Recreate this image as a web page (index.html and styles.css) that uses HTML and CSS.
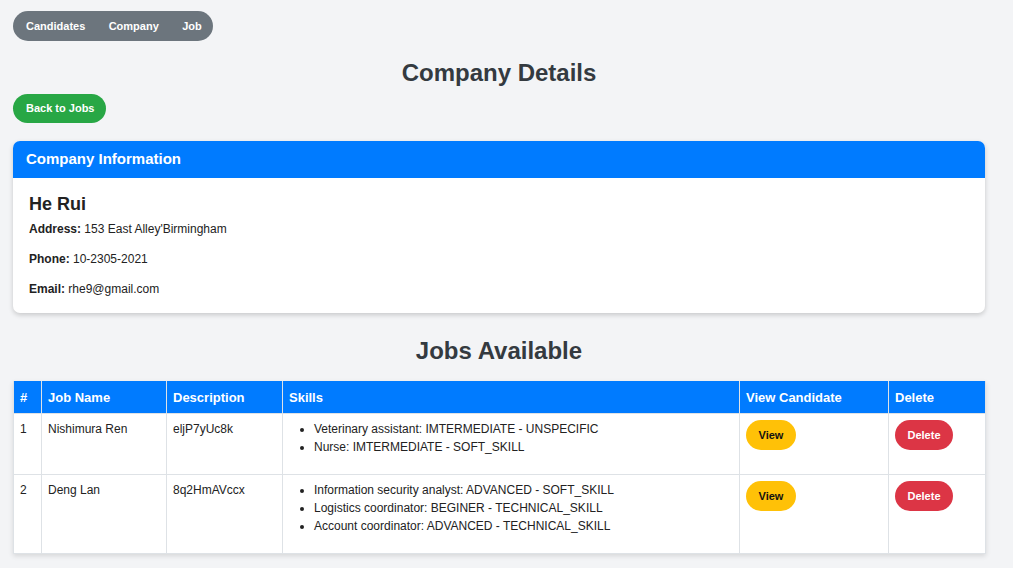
FILE: index.html
```html
<!DOCTYPE html>
<html lang="en">
<head>
<meta charset="utf-8">
<title>Company Details</title>
<link rel="stylesheet" href="styles.css">
</head>
<body>
<div class="page">
  <nav class="nav">
    <a href="#" class="nav-link">Candidates</a>
    <a href="#" class="nav-link">Company</a>
    <a href="#" class="nav-link">Job</a>
  </nav>
  <h1 class="title">Company Details</h1>
  <div class="actions"><a href="#" class="btn btn-green">Back to Jobs</a></div>

  <section class="card">
    <div class="card-header">Company Information</div>
    <div class="card-body">
      <h3 class="company-name">He Rui</h3>
      <p><strong>Address:</strong> 153 East Alley'Birmingham</p>
      <p><strong>Phone:</strong> 10-2305-2021</p>
      <p class="last"><strong>Email:</strong> rhe9@gmail.com</p>
    </div>
  </section>

  <h2 class="title title-jobs">Jobs Available</h2>

  <table class="jobs">
    <colgroup>
      <col class="c-num"><col class="c-name"><col class="c-desc"><col class="c-skills"><col class="c-view"><col class="c-del">
    </colgroup>
    <thead>
      <tr><th>#</th><th>Job Name</th><th>Description</th><th>Skills</th><th>View Candidate</th><th>Delete</th></tr>
    </thead>
    <tbody>
      <tr>
        <td>1</td>
        <td>Nishimura Ren</td>
        <td>eljP7yUc8k</td>
        <td><ul class="skills">
          <li>Veterinary assistant: IMTERMEDIATE - UNSPECIFIC</li>
          <li>Nurse: IMTERMEDIATE - SOFT_SKILL</li>
        </ul></td>
        <td><a href="#" class="btn btn-yellow">View</a></td>
        <td><a href="#" class="btn btn-red">Delete</a></td>
      </tr>
      <tr>
        <td>2</td>
        <td>Deng Lan</td>
        <td>8q2HmAVccx</td>
        <td><ul class="skills">
          <li>Information security analyst: ADVANCED - SOFT_SKILL</li>
          <li>Logistics coordinator: BEGINER - TECHNICAL_SKILL</li>
          <li>Account coordinator: ADVANCED - TECHNICAL_SKILL</li>
        </ul></td>
        <td><a href="#" class="btn btn-yellow">View</a></td>
        <td><a href="#" class="btn btn-red">Delete</a></td>
      </tr>
    </tbody>
  </table>
</div>
</body>
</html>
```

FILE: styles.css
```css
* { box-sizing: border-box; }
html, body { margin: 0; padding: 0; }
body {
  background: #f3f4f6;
  font-family: "Liberation Sans", Arial, sans-serif;
  color: #222;
}
.page {
  padding: 11px 28px 20px 13px;
}
.nav {
  display: inline-flex;
  align-items: center;
  height: 30px;
  background: #6c757d;
  border-radius: 15px;
}
.nav-link {
  color: #fff;
  text-decoration: none;
  font-weight: bold;
  font-size: 11px;
  padding: 0 11.7px;
  line-height: 30px;
}
.nav-link:first-child { padding-left: 13px; }
.title {
  text-align: center;
  font-size: 24px;
  font-weight: bold;
  color: #343a40;
  line-height: 28px;
  margin: 18px 0 7px;
}
.title-jobs { margin: 24px 0 16px; }
.actions { display: flex; }
.btn {
  display: inline-block;
  text-decoration: none;
  font-weight: bold;
  font-size: 11px;
  line-height: 14px;
  padding: 8px 12.5px;
  border-radius: 15px;
}
.btn-green { background: #28a745; color: #fff; padding: 7px 11.5px 8px 13px; }
.btn-yellow { background: #ffc107; color: #111; }
.btn-red { background: #dc3545; color: #fff; }
.card {
  margin-top: 18px;
  background: #fff;
  border-radius: 7px;
  overflow: hidden;
  box-shadow: 0 2px 5px rgba(0,0,0,0.18);
}
.card-header {
  background: #007bff;
  color: #fff;
  font-weight: bold;
  font-size: 15px;
  height: 37px;
  line-height: 35px;
  padding: 0 13px;
}
.card-body { padding: 15px 15px 15px 16px; }
.company-name {
  margin: 0 0 5px;
  font-size: 18px;
  line-height: 22px;
  color: #222;
}
.card-body p {
  margin: 0 0 12px;
  font-size: 12px;
  line-height: 18px;
}
.card-body p.last { margin-bottom: 0; }
.jobs {
  width: 100%;
  table-layout: fixed;
  border-collapse: collapse;
  background: #fff;
  box-shadow: 0 2px 5px rgba(0,0,0,0.12);
  font-size: 12px;
}
.c-num { width: 28px; }
.c-name { width: 125px; }
.c-desc { width: 116px; }
.c-skills { width: 457px; }
.c-view { width: 149px; }
.c-del { width: 97px; }
.jobs th {
  background: #007bff;
  color: #fff;
  text-align: left;
  font-size: 13px;
  font-weight: bold;
  height: 32px;
  padding: 1px 6px 0;
  border: 1px solid #dee2e6;
  border-top: none;
}
.jobs td {
  vertical-align: top;
  padding: 6px 6px;
  line-height: 18px;
  border: 1px solid #dee2e6;
}
.skills {
  margin: 0 0 12px;
  padding-left: 25px;
}
```
